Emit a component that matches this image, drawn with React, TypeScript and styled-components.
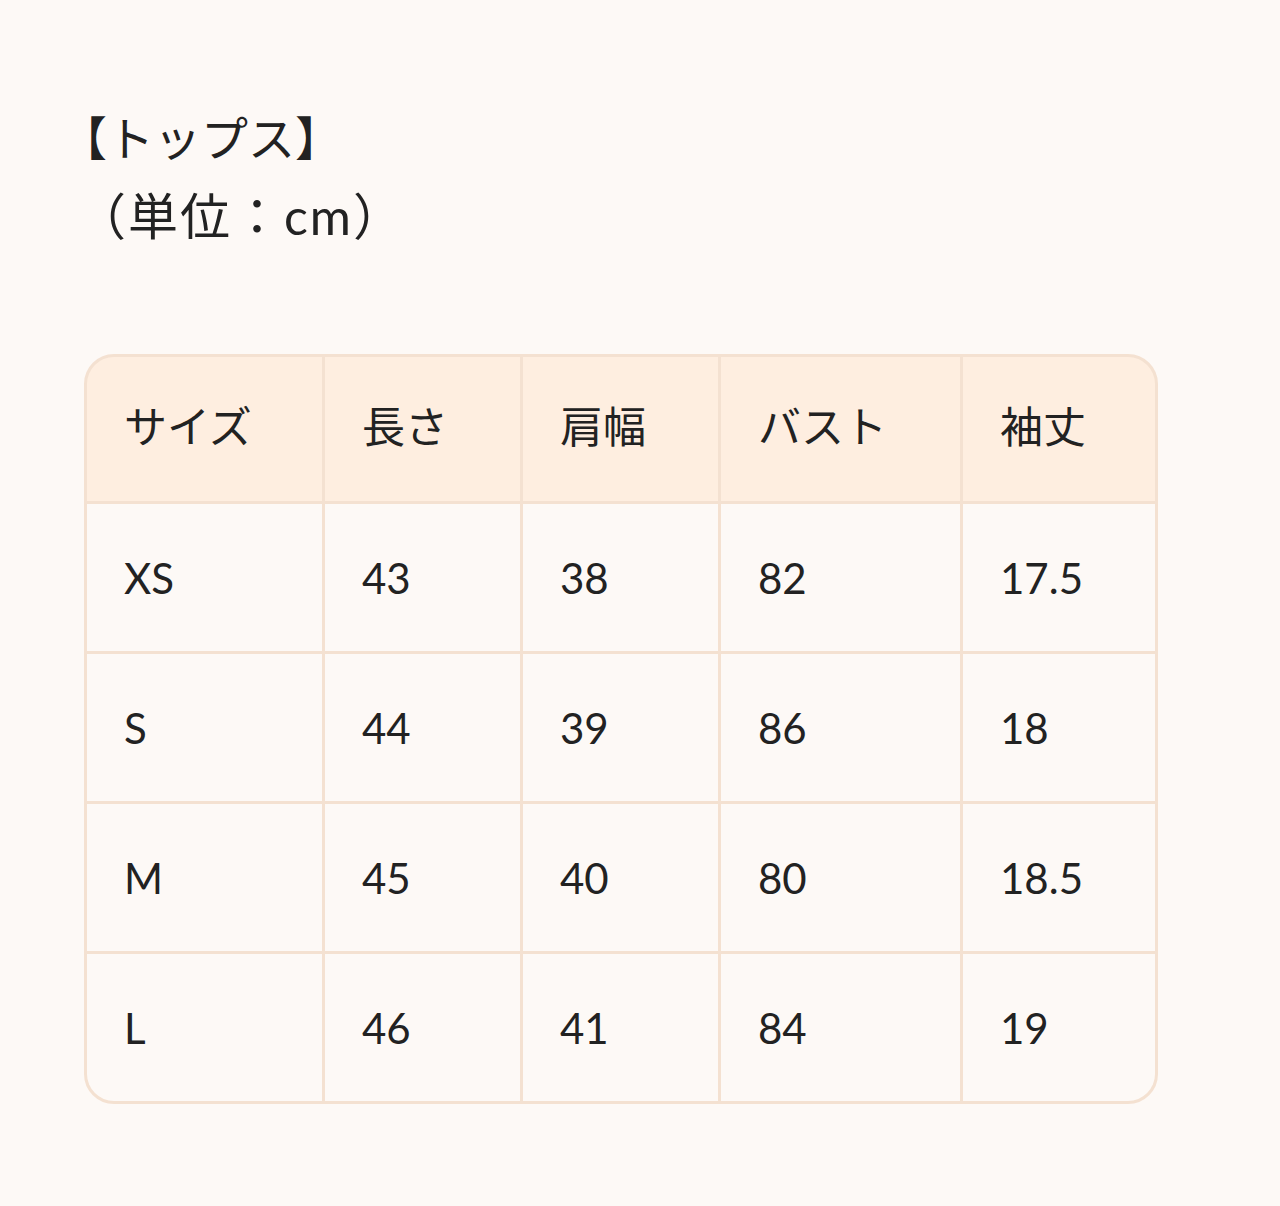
import React from "react";
import styled, { createGlobalStyle } from "styled-components";

const Global = createGlobalStyle`
  html, body { margin: 0; padding: 0; background: #fdf9f6; }
  body { font-family: Lato, "Noto Sans CJK JP", sans-serif; color: #222; }
`;

const Page = styled.div`
  padding: 96px 84px 100px 84px;
  min-height: 1206px;
  box-sizing: border-box;
`;

const Heading = styled.div`
  font-size: 50px;
  line-height: 80px;
  color: #222;
`;

const Title = styled.div`
  margin-left: -24px;
  font-size: 47px;
  font-family: "Noto Sans CJK JP", sans-serif;
`;

const Unit = styled.div`
  margin-left: -8px;
  letter-spacing: 2px;
  font-family: Lato, "Noto Sans CJK JP", sans-serif;
`;

const Table = styled.div`
  margin-top: 98px;
  display: grid;
  width: max-content;
  grid-template-columns: 235px 195px 195px 239px 192px;
  grid-auto-rows: 147px;
  grid-template-rows: 144px;
  gap: 3px;
  background: #f4e1d1;
  border: 3px solid #f4e1d1;
  border-radius: 30px;
  overflow: hidden;
`;

const Cell = styled.div<{ $head?: boolean }>`
  background: ${(p) => (p.$head ? "#feeee0" : "#fdf9f6")};
  display: flex;
  align-items: center;
  padding-left: 37px;
  padding-bottom: ${(p) => (p.$head ? "10px" : "0")};
  font-size: ${(p) => (p.$head ? "43px" : "42px")};
  font-family: ${(p) =>
    p.$head ? `"Noto Sans CJK JP", sans-serif` : `Lato, "Noto Sans CJK JP", sans-serif`};
  color: #222;
`;

const headers = ["サイズ", "長さ", "肩幅", "バスト", "袖丈"];
const rows = [
  ["XS", "43", "38", "82", "17.5"],
  ["S", "44", "39", "86", "18"],
  ["M", "45", "40", "80", "18.5"],
  ["L", "46", "41", "84", "19"],
];

export default function App() {
  return (
    <>
      <Global />
      <Page>
        <Heading>
          <Title>【トップス】</Title>
          <Unit>（単位：cm）</Unit>
        </Heading>
        <Table>
          {headers.map((h) => (
            <Cell key={h} $head>
              {h}
            </Cell>
          ))}
          {rows.map((r) =>
            r.map((c, i) => <Cell key={r[0] + i}>{c}</Cell>)
          )}
        </Table>
      </Page>
    </>
  );
}
